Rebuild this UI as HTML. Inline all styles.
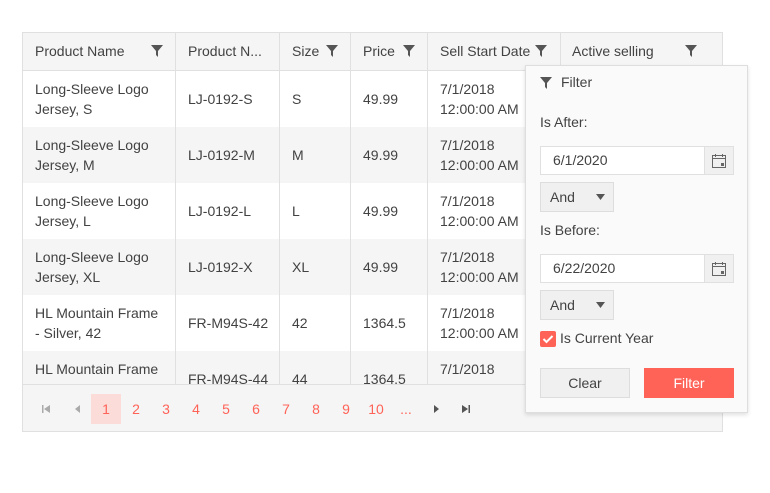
<!DOCTYPE html>
<html><head><style>
body{margin:0;width:770px;height:493px;background:#fff;font-family:"Liberation Sans",sans-serif;font-size:14px;color:#424242;position:relative;overflow:hidden}
.a{position:absolute}
.grid{left:22px;top:32px;width:699px;height:398px;border:1px solid #e0e0e0;overflow:hidden}
.hd{left:0;top:0;width:699px;height:37px;background:#f5f5f5;border-bottom:1px solid #e0e0e0}
.row{left:0;width:699px;height:56px}
.g{background:#f5f5f5}
.vl{top:0;width:1px;height:351px;background:#e0e0e0}
.c{position:absolute;line-height:20px}
.pg{left:0;top:351px;width:699px;height:47px;background:#f5f5f5;border-top:1px solid #e0e0e0}
.pn{position:absolute;top:0;width:30px;height:30px;line-height:30px;text-align:center;color:#ff6358}
.pop{left:525px;top:65px;width:221px;height:346px;background:#fafafa;border:1px solid #dedede;box-shadow:0 2px 4px rgba(0,0,0,.12)}
.inp{position:absolute;left:14px;width:192px;height:27px;background:#fff;border:1px solid #e0e0e0}
.cal{position:absolute;right:0;top:0;width:28px;height:27px;background:#f0f0f0;border-left:1px solid #e0e0e0}
.dd{position:absolute;left:14px;width:72px;height:28px;background:#f0f0f0;border:1px solid #ddd;line-height:28px}
</style></head><body>
<div class="a grid">
 <div class="a hd"></div>
 <div class="a row" style="top:38px"></div>
 <div class="a row g" style="top:94px"></div>
 <div class="a row" style="top:150px"></div>
 <div class="a row g" style="top:206px"></div>
 <div class="a row" style="top:262px"></div>
 <div class="a row g" style="top:318px"></div>
 <div class="a vl" style="left:152px"></div>
 <div class="a vl" style="left:256px"></div>
 <div class="a vl" style="left:327px"></div>
 <div class="a vl" style="left:404px"></div>
 <div class="a vl" style="left:537px"></div>
 <div class="c" style="left:12px;top:8px">Product Name</div>
 <div class="c" style="left:165px;top:8px">Product N...</div>
 <div class="c" style="left:269px;top:8px">Size</div>
 <div class="c" style="left:340px;top:8px">Price</div>
 <div class="c" style="left:417px;top:8px">Sell Start Date</div>
 <div class="c" style="left:549px;top:8px">Active selling</div>
 <svg class="a" style="left:127px;top:11px" width="14" height="14" viewBox="0 0 14 14"><path d="M1 1h12L8 7v6L6 11V7z" fill="#555"/></svg>
 <svg class="a" style="left:302px;top:11px" width="14" height="14" viewBox="0 0 14 14"><path d="M1 1h12L8 7v6L6 11V7z" fill="#555"/></svg>
 <svg class="a" style="left:379px;top:11px" width="14" height="14" viewBox="0 0 14 14"><path d="M1 1h12L8 7v6L6 11V7z" fill="#555"/></svg>
 <svg class="a" style="left:511px;top:11px" width="14" height="14" viewBox="0 0 14 14"><path d="M1 1h12L8 7v6L6 11V7z" fill="#555"/></svg>
 <svg class="a" style="left:661px;top:11px" width="14" height="14" viewBox="0 0 14 14"><path d="M1 1h12L8 7v6L6 11V7z" fill="#555"/></svg>
 <div class="c" style="left:12px;top:46px">Long-Sleeve Logo<br>Jersey, S</div>
 <div class="c" style="left:165px;top:56px">LJ-0192-S</div><div class="c" style="left:269px;top:56px">S</div><div class="c" style="left:340px;top:56px">49.99</div><div class="c" style="left:417px;top:46px">7/1/2018<br>12:00:00 AM</div>
 <div class="c" style="left:12px;top:102px">Long-Sleeve Logo<br>Jersey, M</div>
 <div class="c" style="left:165px;top:112px">LJ-0192-M</div><div class="c" style="left:269px;top:112px">M</div><div class="c" style="left:340px;top:112px">49.99</div><div class="c" style="left:417px;top:102px">7/1/2018<br>12:00:00 AM</div>
 <div class="c" style="left:12px;top:158px">Long-Sleeve Logo<br>Jersey, L</div>
 <div class="c" style="left:165px;top:168px">LJ-0192-L</div><div class="c" style="left:269px;top:168px">L</div><div class="c" style="left:340px;top:168px">49.99</div><div class="c" style="left:417px;top:158px">7/1/2018<br>12:00:00 AM</div>
 <div class="c" style="left:12px;top:214px">Long-Sleeve Logo<br>Jersey, XL</div>
 <div class="c" style="left:165px;top:224px">LJ-0192-X</div><div class="c" style="left:269px;top:224px">XL</div><div class="c" style="left:340px;top:224px">49.99</div><div class="c" style="left:417px;top:214px">7/1/2018<br>12:00:00 AM</div>
 <div class="c" style="left:12px;top:270px">HL Mountain Frame<br>- Silver, 42</div>
 <div class="c" style="left:165px;top:280px">FR-M94S-42</div><div class="c" style="left:269px;top:280px">42</div><div class="c" style="left:340px;top:280px">1364.5</div><div class="c" style="left:417px;top:270px">7/1/2018<br>12:00:00 AM</div>
 <div class="c" style="left:12px;top:326px">HL Mountain Frame<br>- Silver, 44</div>
 <div class="c" style="left:165px;top:336px">FR-M94S-44</div><div class="c" style="left:269px;top:336px">44</div><div class="c" style="left:340px;top:336px">1364.5</div><div class="c" style="left:417px;top:326px">7/1/2018<br>12:00:00 AM</div>
 <div class="a pg">
  <div style="position:absolute;left:0;top:9px;width:699px;height:30px">
   <svg class="a" style="left:19px;top:11px" width="8" height="8"><path d="M0 0h1.5v8H0zM8 0v8L2 4z" fill="#aaa"/></svg>
   <svg class="a" style="left:51px;top:11px" width="8" height="8"><path d="M6 0v8L1 4z" fill="#aaa"/></svg>
   <div class="pn" style="left:68px;background:#fbdcd8">1</div>
   <div class="pn" style="left:98px">2</div><div class="pn" style="left:128px">3</div><div class="pn" style="left:158px">4</div><div class="pn" style="left:188px">5</div><div class="pn" style="left:218px">6</div><div class="pn" style="left:248px">7</div><div class="pn" style="left:278px">8</div><div class="pn" style="left:308px">9</div><div class="pn" style="left:338px">10</div><div class="pn" style="left:368px">...</div>
   <svg class="a" style="left:410px;top:11px" width="8" height="8"><path d="M1 0v8l5-4z" fill="#555"/></svg>
   <svg class="a" style="left:439px;top:11px" width="8" height="8"><path d="M0 0v8l6-4zM6.5 0H8v8H6.5z" fill="#555"/></svg>
  </div>
 </div>
</div>
<div class="a pop">
 <svg class="a" style="left:13px;top:10px" width="14" height="14" viewBox="0 0 14 14"><path d="M1 1h12L8 7v6L6 11V7z" fill="#555"/></svg>
 <div class="c" style="left:35px;top:6px">Filter</div>
 <div class="c" style="left:14px;top:46px">Is After:</div>
 <div class="inp" style="top:80px"><div class="c" style="left:12px;top:3px">6/1/2020</div><div class="cal"><svg style="position:absolute;left:6px;top:6px" width="16" height="16" viewBox="0 0 16 16"><rect x="1.5" y="2.5" width="13" height="12" fill="none" stroke="#666"/><path d="M1.5 5.5h13M4.5 1v3M11.5 1v3" stroke="#666"/><rect x="10" y="10" width="3" height="3" fill="#666"/></svg></div></div>
 <div class="dd" style="top:116px"><span style="margin-left:9px">And</span><svg class="a" style="left:55px;top:11px" width="9" height="6"><path d="M0 0h9L4.5 6z" fill="#555"/></svg></div>
 <div class="c" style="left:14px;top:154px">Is Before:</div>
 <div class="inp" style="top:188px"><div class="c" style="left:12px;top:3px">6/22/2020</div><div class="cal"><svg style="position:absolute;left:6px;top:6px" width="16" height="16" viewBox="0 0 16 16"><rect x="1.5" y="2.5" width="13" height="12" fill="none" stroke="#666"/><path d="M1.5 5.5h13M4.5 1v3M11.5 1v3" stroke="#666"/><rect x="10" y="10" width="3" height="3" fill="#666"/></svg></div></div>
 <div class="dd" style="top:224px"><span style="margin-left:9px">And</span><svg class="a" style="left:55px;top:11px" width="9" height="6"><path d="M0 0h9L4.5 6z" fill="#555"/></svg></div>
 <div class="a" style="left:14px;top:265px;width:16px;height:16px;background:#ff6358;border-radius:2px"><svg width="16" height="16"><path d="M3.5 8l3 3 6-6" stroke="#fff" stroke-width="2" fill="none"/></svg></div>
 <div class="c" style="left:34px;top:262px">Is Current Year</div>
 <div class="a" style="left:14px;top:302px;width:88px;height:28px;background:#f0f0f0;border:1px solid #ddd;text-align:center;line-height:28px">Clear</div>
 <div class="a" style="left:118px;top:302px;width:90px;height:30px;background:#ff6358;color:#fff;text-align:center;line-height:30px">Filter</div>
</div>
</body></html>
